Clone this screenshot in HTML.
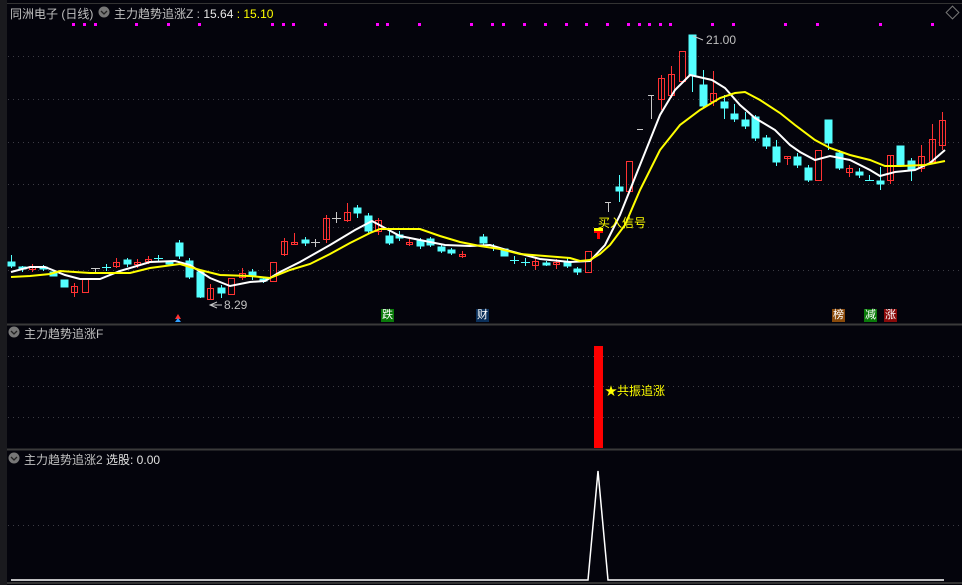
<!DOCTYPE html>
<html><head><meta charset="utf-8"><style>
html,body{margin:0;padding:0;background:#04040c;}
body{width:962px;height:585px;overflow:hidden;position:relative;font-family:"Liberation Sans","Noto Sans CJK SC",sans-serif;}
.t{position:absolute;font-size:12px;white-space:nowrap;}
</style></head><body>
<svg width="962" height="585" style="position:absolute;left:0;top:0" xmlns="http://www.w3.org/2000/svg">
<rect width="962" height="585" fill="#04040c"/>
<rect x="0" y="0" width="7" height="585" fill="#1a1a1e"/>
<line x1="7" y1="3.5" x2="962" y2="3.5" stroke="#333" />
<line x1="7" y1="324.5" x2="962" y2="324.5" stroke="#3a3a3a" stroke-width="2"/>
<line x1="7" y1="449.5" x2="962" y2="449.5" stroke="#3a3a3a" stroke-width="2"/>
<line x1="7" y1="583" x2="962" y2="583" stroke="#333" stroke-width="2"/>
<g stroke="#3c3c44" stroke-dasharray="1,4">
<line x1="8" y1="56.5" x2="962" y2="56.5"/><line x1="8" y1="99.5" x2="962" y2="99.5"/>
<line x1="8" y1="142.5" x2="962" y2="142.5"/><line x1="8" y1="184.5" x2="962" y2="184.5"/>
<line x1="8" y1="227.5" x2="962" y2="227.5"/><line x1="8" y1="270.5" x2="962" y2="270.5"/>
<line x1="8" y1="356.5" x2="962" y2="356.5"/><line x1="8" y1="386.5" x2="962" y2="386.5"/>
<line x1="8" y1="417.5" x2="962" y2="417.5"/><line x1="8" y1="525.5" x2="962" y2="525.5"/>
</g>
<g fill="#ff00ff">
<rect x="72" y="23" width="3" height="3"/><rect x="83" y="23" width="3" height="3"/><rect x="94" y="23" width="3" height="3"/><rect x="135" y="23" width="3" height="3"/><rect x="167" y="23" width="3" height="3"/><rect x="198" y="23" width="3" height="3"/><rect x="271" y="23" width="3" height="3"/><rect x="282" y="23" width="3" height="3"/><rect x="292" y="23" width="3" height="3"/><rect x="324" y="23" width="3" height="3"/><rect x="376" y="23" width="3" height="3"/><rect x="386" y="23" width="3" height="3"/><rect x="418" y="23" width="3" height="3"/><rect x="470" y="23" width="3" height="3"/>
<rect x="491" y="23" width="3" height="3"/><rect x="502" y="23" width="3" height="3"/><rect x="523" y="23" width="3" height="3"/><rect x="544" y="23" width="3" height="3"/><rect x="565" y="23" width="3" height="3"/><rect x="585" y="23" width="3" height="3"/><rect x="606" y="23" width="3" height="3"/><rect x="627" y="23" width="3" height="3"/><rect x="638" y="23" width="3" height="3"/><rect x="648" y="23" width="3" height="3"/><rect x="659" y="23" width="3" height="3"/><rect x="669" y="23" width="3" height="3"/><rect x="711" y="23" width="3" height="3"/><rect x="732" y="23" width="3" height="3"/><rect x="784" y="23" width="3" height="3"/><rect x="816" y="23" width="3" height="3"/><rect x="879" y="23" width="3" height="3"/><rect x="931" y="23" width="3" height="3"/>
</g>
<g stroke="#54ffff" fill="#54ffff">
<line x1="11.5" y1="255" x2="11.5" y2="268"/><rect x="8" y="262" width="7" height="4"/>
<line x1="22.5" y1="266" x2="22.5" y2="272"/><rect x="19" y="267" width="7" height="2"/>
<line x1="43.5" y1="265" x2="43.5" y2="271"/><rect x="40" y="267" width="7" height="2"/>
<rect x="50" y="272" width="7" height="4"/>
<rect x="61" y="280" width="7" height="7"/>
<line x1="106.5" y1="264" x2="106.5" y2="271"/><line x1="102" y1="267.5" x2="111" y2="267.5"/>
<line x1="127.5" y1="258" x2="127.5" y2="267"/><rect x="124" y="260" width="7" height="4"/>
<line x1="158.5" y1="255" x2="158.5" y2="262"/><line x1="154" y1="258.5" x2="163" y2="258.5"/>
<rect x="166" y="261" width="7" height="3"/>
<line x1="179.5" y1="240" x2="179.5" y2="259"/><rect x="176" y="243" width="7" height="13"/>
<line x1="189.5" y1="258" x2="189.5" y2="279"/><rect x="186" y="261" width="7" height="16"/>
<line x1="200.5" y1="270" x2="200.5" y2="298"/><rect x="197" y="272" width="7" height="25"/>
<line x1="221.5" y1="285" x2="221.5" y2="298"/><rect x="218" y="288" width="7" height="5"/>
<line x1="252.5" y1="269" x2="252.5" y2="280"/><rect x="249" y="272" width="7" height="4"/>
<line x1="263.5" y1="277" x2="263.5" y2="283"/><rect x="260" y="279" width="7" height="2"/>
<rect x="302" y="240" width="7" height="3"/><line x1="305.5" y1="237" x2="305.5" y2="246"/>
<line x1="357.5" y1="205" x2="357.5" y2="218"/><rect x="354" y="208" width="7" height="5"/>
<line x1="368.5" y1="213" x2="368.5" y2="234"/><rect x="365" y="216" width="7" height="15"/>
<line x1="389.5" y1="231" x2="389.5" y2="245"/><rect x="386" y="236" width="7" height="7"/>
<line x1="399.5" y1="231" x2="399.5" y2="241"/><rect x="396" y="235" width="7" height="3"/>
<line x1="420.5" y1="238" x2="420.5" y2="249"/><rect x="417" y="241" width="7" height="5"/>
<line x1="430.5" y1="237" x2="430.5" y2="247"/><rect x="427" y="239" width="7" height="6"/>
<line x1="441.5" y1="244" x2="441.5" y2="253"/><rect x="438" y="247" width="7" height="4"/>
<line x1="451.5" y1="248" x2="451.5" y2="255"/><rect x="448" y="250" width="7" height="3"/>
<line x1="483.5" y1="234" x2="483.5" y2="245"/><rect x="480" y="237" width="7" height="6"/>
<line x1="493.5" y1="244" x2="493.5" y2="251"/><line x1="489" y1="247.5" x2="498" y2="247.5"/>
<rect x="501" y="249" width="7" height="7"/>
<line x1="514.5" y1="256" x2="514.5" y2="264"/><line x1="510" y1="260.5" x2="519" y2="260.5"/>
<line x1="525.5" y1="258" x2="525.5" y2="266"/><line x1="521" y1="262.5" x2="530" y2="262.5"/>
<line x1="546.5" y1="261" x2="546.5" y2="266"/><rect x="543" y="263" width="7" height="2"/>
<line x1="567.5" y1="258" x2="567.5" y2="268"/><rect x="564" y="262" width="7" height="4"/>
<line x1="577.5" y1="267" x2="577.5" y2="275"/><rect x="574" y="269" width="7" height="3"/>
<line x1="619.5" y1="175" x2="619.5" y2="202"/><rect x="616" y="187" width="7" height="4"/>
<line x1="692.5" y1="35" x2="692.5" y2="92"/><rect x="689" y="35" width="7" height="40"/>
<line x1="703.5" y1="70" x2="703.5" y2="108"/><rect x="700" y="85" width="7" height="21"/>
<line x1="724.5" y1="95" x2="724.5" y2="119"/><rect x="721" y="102" width="7" height="6"/>
<line x1="734.5" y1="104" x2="734.5" y2="122"/><rect x="731" y="114" width="7" height="5"/>
<line x1="745.5" y1="112" x2="745.5" y2="129"/><rect x="742" y="120" width="7" height="6"/>
<line x1="755.5" y1="115" x2="755.5" y2="141"/><rect x="752" y="117" width="7" height="21"/>
<line x1="766.5" y1="135" x2="766.5" y2="149"/><rect x="763" y="138" width="7" height="8"/>
<line x1="776.5" y1="140" x2="776.5" y2="166"/><rect x="773" y="147" width="7" height="15"/>
<line x1="797.5" y1="153" x2="797.5" y2="168"/><rect x="794" y="157" width="7" height="8"/>
<line x1="808.5" y1="165" x2="808.5" y2="182"/><rect x="805" y="168" width="7" height="12"/>
<line x1="828.5" y1="120" x2="828.5" y2="150"/><rect x="825" y="120" width="7" height="23"/>
<line x1="839.5" y1="150" x2="839.5" y2="170"/><rect x="836" y="153" width="7" height="15"/>
<line x1="859.5" y1="168" x2="859.5" y2="178"/><rect x="856" y="172" width="7" height="3"/>
<line x1="869.5" y1="175" x2="869.5" y2="181"/><line x1="865" y1="180.5" x2="874" y2="180.5"/>
<line x1="880.5" y1="167" x2="880.5" y2="190"/><rect x="877" y="181" width="7" height="3"/>
<rect x="897" y="146" width="7" height="19"/>
<line x1="911.5" y1="158" x2="911.5" y2="181"/><rect x="908" y="161" width="7" height="9"/>
</g>
<g stroke="#ff3232" fill="none">
<line x1="32.5" y1="264" x2="32.5" y2="272"/><rect x="29.5" y="267.5" width="6" height="2"/>
<line x1="74.5" y1="283" x2="74.5" y2="297"/><rect x="71.5" y="286.5" width="6" height="6"/>
<rect x="82.5" y="278.5" width="6" height="14"/>
<line x1="116.5" y1="258" x2="116.5" y2="268"/><rect x="113.5" y="262.5" width="6" height="4"/>
<line x1="137.5" y1="259" x2="137.5" y2="268"/><rect x="134.5" y="262.5" width="6" height="2"/>
<line x1="148.5" y1="256" x2="148.5" y2="264"/><rect x="145.5" y="259.5" width="6" height="2"/>
<line x1="210.5" y1="284" x2="210.5" y2="300"/><rect x="207.5" y="288.5" width="6" height="11"/>
<rect x="228.5" y="278.5" width="6" height="16"/>
<line x1="242.5" y1="268" x2="242.5" y2="280"/><rect x="239.5" y="273.5" width="6" height="4"/>
<rect x="270.5" y="262.5" width="6" height="19"/>
<line x1="284.5" y1="238" x2="284.5" y2="256"/><rect x="281.5" y="241.5" width="6" height="13"/>
<line x1="294.5" y1="233" x2="294.5" y2="245"/><rect x="291.5" y="242.5" width="6" height="2"/>
<line x1="326.5" y1="215" x2="326.5" y2="243"/><rect x="323.5" y="218.5" width="6" height="21"/>
<line x1="347.5" y1="203" x2="347.5" y2="222"/><rect x="344.5" y="212.5" width="6" height="8"/>
<line x1="378.5" y1="218" x2="378.5" y2="235"/><rect x="375.5" y="220.5" width="6" height="11"/>
<line x1="409.5" y1="239" x2="409.5" y2="246"/><rect x="406.5" y="242.5" width="6" height="2"/>
<line x1="462.5" y1="251" x2="462.5" y2="258"/><rect x="459.5" y="254.5" width="6" height="2"/>
<line x1="535.5" y1="258" x2="535.5" y2="270"/><rect x="532.5" y="261.5" width="6" height="4"/>
<line x1="556.5" y1="259" x2="556.5" y2="269"/><rect x="553.5" y="262.5" width="6" height="2"/>
<rect x="585.5" y="251.5" width="6" height="21"/>
<rect x="626.5" y="161.5" width="6" height="30"/>
<line x1="661.5" y1="75" x2="661.5" y2="110"/><rect x="658.5" y="78.5" width="6" height="21"/>
<line x1="671.5" y1="66" x2="671.5" y2="98"/><rect x="668.5" y="74.5" width="6" height="21"/>
<rect x="679.5" y="51.5" width="6" height="30"/>
<line x1="713.5" y1="71" x2="713.5" y2="106"/><rect x="710.5" y="93.5" width="6" height="8"/>
<line x1="787.5" y1="156" x2="787.5" y2="165"/><rect x="784.5" y="156.5" width="6" height="2"/>
<rect x="815.5" y="150.5" width="6" height="30"/>
<line x1="849.5" y1="165" x2="849.5" y2="177"/><rect x="846.5" y="168.5" width="6" height="4"/>
<line x1="890.5" y1="155" x2="890.5" y2="184"/><rect x="887.5" y="155.5" width="6" height="25"/>
<line x1="921.5" y1="145" x2="921.5" y2="172"/><rect x="918.5" y="156.5" width="6" height="12"/>
<line x1="932.5" y1="124" x2="932.5" y2="164"/><rect x="929.5" y="139.5" width="6" height="22"/>
<line x1="942.5" y1="112" x2="942.5" y2="150"/><rect x="939.5" y="120.5" width="6" height="25"/>
</g>
<g stroke="#c8c8c8">
<line x1="91" y1="268.5" x2="100" y2="268.5"/><line x1="95.5" y1="268" x2="95.5" y2="274"/>
<line x1="311" y1="242.5" x2="320" y2="242.5"/><line x1="315.5" y1="239" x2="315.5" y2="247"/>
<line x1="332" y1="218.5" x2="341" y2="218.5"/><line x1="336.5" y1="212" x2="336.5" y2="223"/>
<line x1="605" y1="202.5" x2="611" y2="202.5"/><line x1="608.5" y1="202" x2="608.5" y2="212"/>
<line x1="637" y1="129.5" x2="643" y2="129.5"/>
<line x1="648" y1="95.5" x2="654" y2="95.5"/><line x1="651.5" y1="95" x2="651.5" y2="119"/>
</g>
<rect x="594" y="228" width="9" height="3" fill="#ffff00"/>
<rect x="594" y="231" width="9" height="2" fill="#ff0000"/>
<rect x="597" y="233" width="3" height="6" fill="#ff0000"/>
<polyline fill="none" stroke="#ffffff" stroke-width="2" points="11,272 30,267 45,267 65,275 80,279 100,279 120,271 150,262 175,261 190,265 210,278 230,286 250,282 265,281 280,272 300,262 330,245 355,230 372,221 385,228 400,236 420,240 445,245 470,246 490,245 510,251 540,259 570,262 590,261 605,245 620,215 640,165 660,115 675,90 690,75 712,80 725,88 740,105 755,118 775,130 790,145 800,152 815,160 830,156 850,160 870,170 880,176 895,172 915,170 930,163 945,150"/>
<polyline fill="none" stroke="#ffff00" stroke-width="2" points="11,277 30,276 50,274 60,271 90,273 130,273 150,268 180,264 200,270 220,275 250,276 270,278 290,270 310,264 330,254 350,243 370,233 380,229 420,229 440,236 460,242 480,246 500,249 520,254 545,256 570,258 580,261 590,260 600,254 610,245 625,225 640,190 660,150 680,125 700,110 720,98 735,93 745,92 760,100 780,113 795,125 815,140 830,148 850,155 870,160 885,166 900,166 925,165 945,161"/>
<polygon points="178,314 175,319 181,319" fill="#ff3030"/><polygon points="178,318 175,322 181,322" fill="#30a0ff"/>
<polyline points="217,302 210,305 217,308" fill="none" stroke="#c8c8c8"/><line x1="210" y1="305" x2="222" y2="305" stroke="#c8c8c8"/>
<line x1="693" y1="36" x2="703" y2="40" stroke="#c8c8c8"/>
<rect x="594" y="346" width="9" height="102" fill="#ff0000"/>
<polyline fill="none" stroke="#ffffff" stroke-width="1.5" points="11,580 588,580 598,471 608,580 944,580"/>
<rect x="948" y="8" width="9" height="9" fill="none" stroke="#777" transform="rotate(45 952.5 12.5)"/>
<circle cx="104" cy="12" r="5.5" fill="#777"/><polyline points="101,11 104,14 107,11" fill="none" stroke="#222" stroke-width="1.3"/>
<circle cx="14" cy="332" r="5.5" fill="#777"/><polyline points="11,331 14,334 17,331" fill="none" stroke="#222" stroke-width="1.3"/>
<circle cx="14" cy="458" r="5.5" fill="#777"/><polyline points="11,457 14,460 17,457" fill="none" stroke="#222" stroke-width="1.3"/>
</svg>
<div class="t" style="left:10px;top:5px;color:#c0c0c0;font-size:12px">同洲电子 (日线)</div>
<div class="t" style="left:114px;top:5px;color:#c0c0c0;font-size:12px">主力趋势追涨Z : <span style="color:#e8e8e8">15.64</span> <span style="color:#ffff00">: 15.10</span></div>
<div class="t" style="left:224px;top:298px;color:#c0c0c0;font-size:12px">8.29</div>
<div class="t" style="left:706px;top:33px;color:#c0c0c0;font-size:12px">21.00</div>
<div class="t" style="left:598px;top:214px;color:#ffff00;font-size:12px">买入信号</div>
<div class="t" style="left:381px;top:309px;background:#0a7a0a;color:#fff;font-size:11px;line-height:13px;padding:0 1px">跌</div>
<div class="t" style="left:476px;top:309px;background:#0a2f5a;color:#fff;font-size:11px;line-height:13px;padding:0 1px">财</div>
<div class="t" style="left:832px;top:309px;background:#8a4a0a;color:#fff;font-size:11px;line-height:13px;padding:0 1px">榜</div>
<div class="t" style="left:864px;top:309px;background:#0a7a0a;color:#fff;font-size:11px;line-height:13px;padding:0 1px">减</div>
<div class="t" style="left:884px;top:309px;background:#8a0a0a;color:#fff;font-size:11px;line-height:13px;padding:0 1px">涨</div>
<div class="t" style="left:24px;top:325px;color:#c0c0c0">主力趋势追涨F</div>
<div class="t" style="left:605px;top:382px;color:#ffff00;font-size:12px">★共振追涨</div>
<div class="t" style="left:24px;top:451px;color:#c0c0c0">主力趋势追涨2 <span style="color:#e0e0e0">选股: 0.00</span></div>
</body></html>
